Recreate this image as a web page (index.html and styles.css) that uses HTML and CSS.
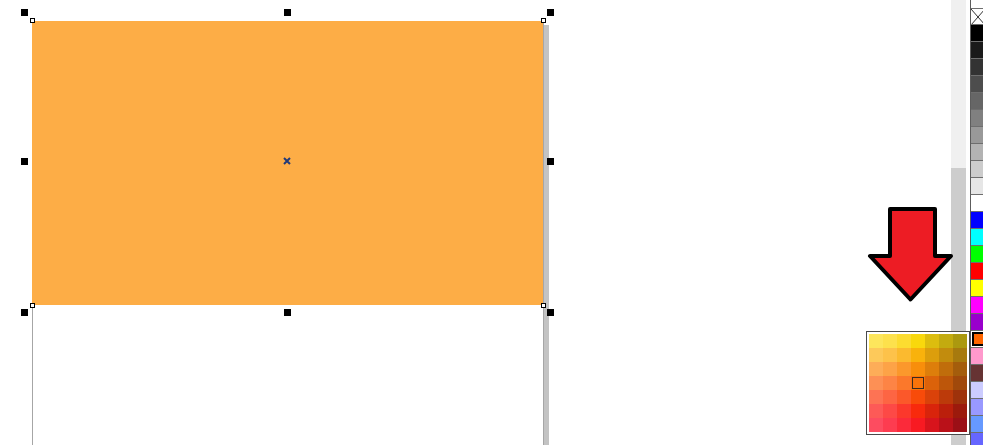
FILE: index.html
```html
<!DOCTYPE html>
<html>
<head>
<meta charset="utf-8">
<link rel="stylesheet" href="styles.css">
</head>
<body>
<div class="app">
  <div class="canvas">
    <div class="page">
      <div class="shape"></div>
    </div>

    <span class="handle h-tl"></span>
    <span class="handle h-tm"></span>
    <span class="handle h-tr"></span>
    <span class="handle h-ml"></span>
    <span class="handle h-mr"></span>
    <span class="handle h-bl"></span>
    <span class="handle h-bm"></span>
    <span class="handle h-br"></span>

    <span class="node n-tl"></span>
    <span class="node n-tr"></span>
    <span class="node n-bl"></span>
    <span class="node n-br"></span>

    <svg class="center-mark" width="8" height="8" viewBox="0 0 8 8">
      <path d="M1 1 L7 7 M7 1 L1 7" stroke="#223a78" stroke-width="2" fill="none"/>
    </svg>

    <svg class="arrow" width="100" height="110" viewBox="860 200 100 110">
      <path d="M890 209 L935 209 L935 256 L951 256 L910.5 299.5 L870 256 L890 256 Z"
            fill="#ed1c24" stroke="#000" stroke-width="4" stroke-linejoin="round"/>
    </svg>

    <div class="popup">
      <div class="grid">
        <span style="background:#fde65c"></span><span style="background:#fde14c"></span><span style="background:#fcdc30"></span><span style="background:#f9d80c"></span><span style="background:#dcbd0e"></span><span style="background:#c3ab0f"></span><span style="background:#ab990f"></span>
        <span style="background:#fdc95a"></span><span style="background:#fdc24a"></span><span style="background:#fbba2f"></span><span style="background:#f9b20c"></span><span style="background:#dc9e0c"></span><span style="background:#c28c0d"></span><span style="background:#a77a0e"></span>
        <span style="background:#fdad58"></span><span style="background:#fda347"></span><span style="background:#fb982c"></span><span style="background:#f88e0b"></span><span style="background:#dd7e0b"></span><span style="background:#c06d0b"></span><span style="background:#a45d0c"></span>
        <span style="background:#fd9055"></span><span style="background:#fd8445"></span><span style="background:#fb782b"></span><span class="picked" style="background:#f8740a"></span><span style="background:#db620a"></span><span style="background:#bd560a"></span><span style="background:#a0490b"></span>
        <span style="background:#fd7354"></span><span style="background:#fd6543"></span><span style="background:#fb582a"></span><span style="background:#f84b0a"></span><span style="background:#da420a"></span><span style="background:#bc3a0a"></span><span style="background:#9e320b"></span>
        <span style="background:#fd5a57"></span><span style="background:#fd4946"></span><span style="background:#fb382c"></span><span style="background:#f82a0c"></span><span style="background:#d9240b"></span><span style="background:#bb1f0b"></span><span style="background:#9c1a0c"></span>
        <span style="background:#fd4c60"></span><span style="background:#fd3c50"></span><span style="background:#fb2a3a"></span><span style="background:#f81a22"></span><span style="background:#d8141c"></span><span style="background:#ba1119"></span><span style="background:#9b0f16"></span>
      </div>
    </div>
  </div>

  <div class="scroll">
    <div class="thumb"></div>
  </div>

  <div class="palette">
    <div class="swatch none">
      <svg width="14" height="16" viewBox="0 0 14 16"><path d="M0 0 L14 16 M14 0 L0 16" stroke="#333" stroke-width="1" fill="none"/></svg>
    </div>
    <div class="swatch" style="background:#000000"></div>
    <div class="swatch" style="background:#1a1a1a"></div>
    <div class="swatch" style="background:#333333"></div>
    <div class="swatch" style="background:#4d4d4d"></div>
    <div class="swatch" style="background:#666666"></div>
    <div class="swatch" style="background:#808080"></div>
    <div class="swatch" style="background:#999999"></div>
    <div class="swatch" style="background:#b3b3b3"></div>
    <div class="swatch" style="background:#cccccc"></div>
    <div class="swatch" style="background:#e6e6e6"></div>
    <div class="swatch" style="background:#ffffff"></div>
    <div class="swatch" style="background:#0000ff"></div>
    <div class="swatch" style="background:#00ffff"></div>
    <div class="swatch" style="background:#00ff00"></div>
    <div class="swatch" style="background:#ff0000"></div>
    <div class="swatch" style="background:#ffff00"></div>
    <div class="swatch" style="background:#ff00ff"></div>
    <div class="swatch" style="background:#9900cc"></div>
    <div class="swatch selected"><span class="sel" style="background:#ff6600"></span></div>
    <div class="swatch" style="background:#ff99cc"></div>
    <div class="swatch" style="background:#663333"></div>
    <div class="swatch" style="background:#ccccff"></div>
    <div class="swatch" style="background:#9999ff"></div>
    <div class="swatch" style="background:#6699ff"></div>
    <div class="swatch" style="background:#6666ff"></div>
  </div>
</div>
</body>
</html>
```

FILE: styles.css
```css
html, body {
  margin: 0;
  padding: 0;
  background: #ffffff;
  font-family: "Liberation Sans", Arial, sans-serif;
  overflow: hidden;
}

.app {
  display: flex;
  width: 983px;
  height: 445px;
  overflow: hidden;
}

.canvas {
  position: relative;
  flex: 0 0 951px;
  height: 445px;
  padding: 21px 0 0 32px;
  box-sizing: border-box;
  z-index: 1;
}

.page {
  width: 510px;
  height: 424px;
  background: #ffffff;
  border-left: 1px solid #a6a6a6;
  border-right: 1px solid #a6a6a6;
  box-shadow: 5px 4px 0 #c3c3c3;
}

.shape {
  margin: 0 0 0 -1px;
  height: 284px;
  background: #fdad46;
}

.handle {
  position: absolute;
  width: 7px;
  height: 7px;
  background: #000;
}
.h-tl { left: 21px; top: 9px; }
.h-tm { left: 284px; top: 9px; }
.h-tr { left: 547px; top: 9px; }
.h-ml { left: 21px; top: 158px; }
.h-mr { left: 547px; top: 158px; }
.h-bl { left: 21px; top: 309px; }
.h-bm { left: 284px; top: 309px; }
.h-br { left: 547px; top: 309px; }

.node {
  position: absolute;
  width: 3px;
  height: 3px;
  background: #fff;
  border: 1px solid #000;
}
.n-tl { left: 30px; top: 18px; }
.n-tr { left: 541px; top: 18px; }
.n-bl { left: 30px; top: 303px; }
.n-br { left: 541px; top: 303px; }

.center-mark {
  position: absolute;
  left: 283px;
  top: 157px;
}

.arrow {
  position: absolute;
  left: 860px;
  top: 200px;
}

.popup {
  position: absolute;
  left: 866px;
  top: 331px;
  padding: 2px;
  background: #fff;
  border: 1px solid #4a4a4a;
  z-index: 2;
}

.grid {
  display: grid;
  grid-template-columns: repeat(7, 14px);
  grid-template-rows: repeat(7, 14px);
  width: 98px;
  height: 98px;
}
.grid span {
  display: block;
}
.grid .picked {
  outline: 1px solid #3a2a20;
  outline-offset: -2px;
}

.scroll {
  flex: 0 0 15px;
  height: 445px;
  background: #f0f0f0;
  margin-right: 4px;
  display: flex;
  flex-direction: column;
  justify-content: flex-end;
}
.thumb {
  height: 277px;
  background: #cdcdcd;
}

.palette {
  flex: 0 0 20px;
  padding-top: 8px;
  border-left: 1px solid #5c5c5c;
  box-sizing: border-box;
  height: 445px;
  overflow: hidden;
}

.swatch {
  height: 16px;
  border-bottom: 1px solid #6e6e6e;
}
.swatch.none {
  background: #fff;
  border-top: 1px solid #6e6e6e;
  height: 15px;
  overflow: hidden;
}
.swatch.none svg {
  display: block;
}
.swatch.selected {
  background: #fff;
  padding: 1px 0 1px 1px;
  box-sizing: border-box;
  height: 17px;
}
.swatch.selected .sel {
  display: block;
  height: 14px;
  box-sizing: border-box;
  border: 2px solid #000;
}
```
